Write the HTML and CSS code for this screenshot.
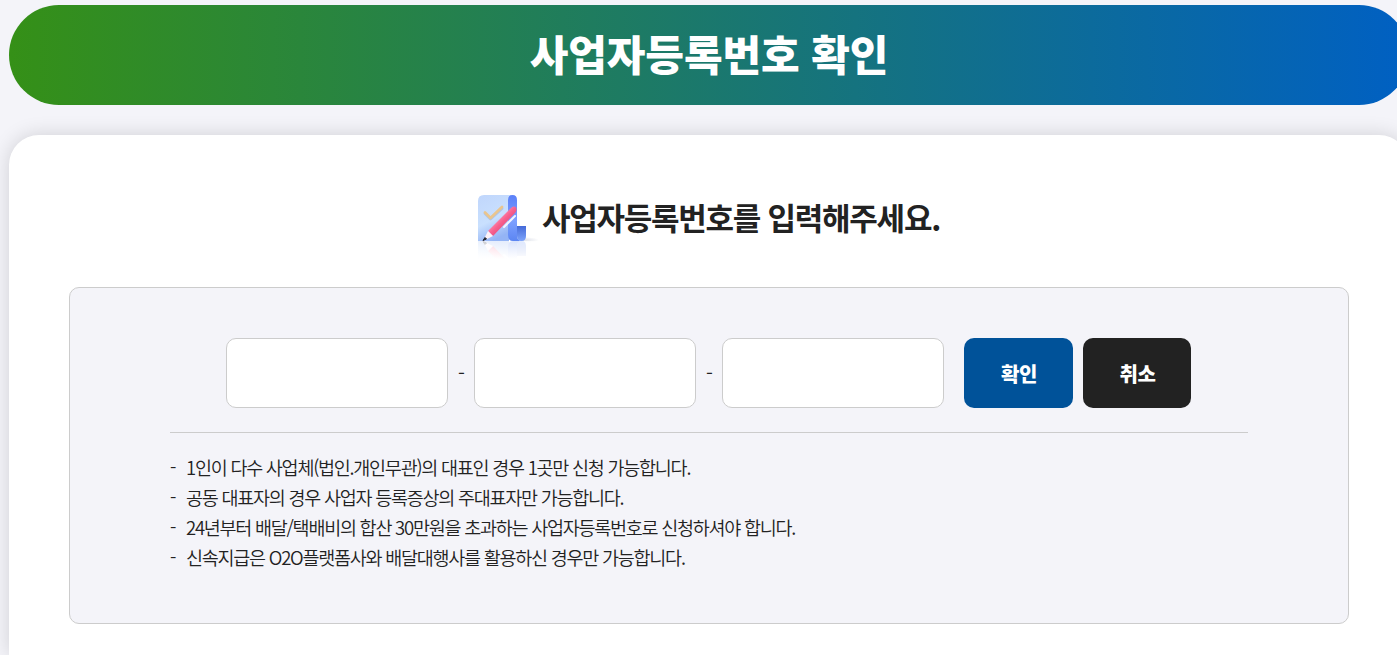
FILE: index.html
```
<!DOCTYPE html>
<html lang="ko">
<head>
    <meta charset="UTF-8">
    <meta name="viewport" content="width=device-width, initial-scale=1.0">
    <title>사업자등록번호 확인</title>
    <link rel="stylesheet" href="styles.css">
</head>
<body>
    <div class="container">
        <h1 class="page-title">사업자등록번호 확인</h1>

        <div class="card">
            <div class="card-title">
                <svg class="title-icon" width="62" height="68" viewBox="0 0 62 68" aria-hidden="true">
                    <defs>
                        <linearGradient id="paper" x1="0" y1="0" x2="0.4" y2="1">
                            <stop offset="0" stop-color="#c0d6fc"/>
                            <stop offset="0.6" stop-color="#c9e0fe"/>
                            <stop offset="1" stop-color="#94b4f5"/>
                        </linearGradient>
                        <linearGradient id="roll" x1="0" y1="0" x2="0" y2="1">
                            <stop offset="0" stop-color="#5b80f8"/>
                            <stop offset="0.55" stop-color="#7da0ff"/>
                            <stop offset="1" stop-color="#5c86f2"/>
                        </linearGradient>
                        <linearGradient id="curl" x1="0" y1="0" x2="0" y2="1">
                            <stop offset="0" stop-color="#456ad8"/>
                            <stop offset="1" stop-color="#7da4fb"/>
                        </linearGradient>
                        <linearGradient id="pen" x1="0.3" y1="0.3" x2="0.7" y2="0.7">
                            <stop offset="0" stop-color="#ff9cb9"/>
                            <stop offset="0.5" stop-color="#f8608e"/>
                            <stop offset="1" stop-color="#e04a78"/>
                        </linearGradient>
                        <linearGradient id="fade" x1="0" y1="0" x2="0" y2="1">
                            <stop offset="0" stop-color="#fff" stop-opacity="0.76"/>
                            <stop offset="0.85" stop-color="#fff"/>
                        </linearGradient>
                        <radialGradient id="shade">
                            <stop offset="0" stop-color="#9da5bd" stop-opacity="0.35"/>
                            <stop offset="1" stop-color="#9da5bd" stop-opacity="0"/>
                        </radialGradient>
                    </defs>
                    <ellipse cx="46" cy="46" rx="15" ry="3" fill="url(#shade)"/>
                    <g id="note">
                        <path d="M6 1H36Q31 1 31 6V47H0V7Q0 1 6 1Z" fill="url(#paper)"/>
                        <path d="M30 6Q30 1 34.500 1Q39 1 39 6V41Q39 47 44 47H35Q30 47 30 41Z" fill="url(#roll)"/>
                        <path d="M39 32H48V42Q48 47 43.500 47Q39 47 39 42Z" fill="url(#curl)"/>
                        <path d="M7 19.500L12.500 25L24 14.500" fill="none" stroke="#99b3df" stroke-width="2.800" stroke-linejoin="round" stroke-linecap="round" opacity="0.6"/>
                        <path d="M7 18.500L12.500 24L24 13" fill="none" stroke="#e9c58f" stroke-width="2.800" stroke-linejoin="round" stroke-linecap="round"/>
                        <path d="M26 33L37 22" stroke="#f3f5ff" stroke-width="2" stroke-linecap="round"/>
                        <path d="M10 37L33 14Q36 11.500 38 13.500Q39.500 16 37 19L15 42Z" fill="url(#pen)"/>
                        <path d="M10 37L15 42L5 47Z" fill="#fff2f7"/>
                        <path d="M7 43.500L8.500 45L5 46.500Z" fill="#202432" stroke="#202432"/>
                    </g>
                    <use href="#note" transform="matrix(1 0 0 -1 0 94)"/>
                    <rect x="0" y="47" width="62" height="21" fill="url(#fade)"/>
                </svg>
                <h2>사업자등록번호를 입력해주세요.</h2>
            </div>

            <div class="form-box">
                <form class="input-group">
                    <input type="text" maxlength="3" aria-label="사업자등록번호 앞자리">
                    <span class="dash">-</span>
                    <input type="text" maxlength="2" aria-label="사업자등록번호 가운데자리">
                    <span class="dash">-</span>
                    <input type="text" maxlength="5" aria-label="사업자등록번호 뒷자리">
                    <div class="button-group">
                        <button type="button" class="confirm-btn">확인</button>
                        <button type="reset" class="cancel-btn">취소</button>
                    </div>
                </form>
                <ul class="notice">
                    <li><span>1인이 다수 사업체(법인.개인무관)의 대표인 경우 1곳만 신청 가능합니다.</span></li>
                    <li><span>공동 대표자의 경우 사업자 등록증상의 주대표자만 가능합니다.</span></li>
                    <li><span>24년부터 배달/택배비의 합산 30만원을 초과하는 사업자등록번호로 신청하셔야 합니다.</span></li>
                    <li><span>신속지급은 O2O플랫폼사와 배달대행사를 활용하신 경우만 가능합니다.</span></li>
                </ul>
            </div>
        </div>
    </div>
</body>
</html>
```
FILE: styles.css
```
* {
    margin: 0;
    padding: 0;
    box-sizing: border-box;
    font-family: 'Noto Sans CJK KR', sans-serif;
}

body {
    height: 100vh;
    padding: 5px 0 0 9px;
    background: #f4f4f9;
    color: #222;
    overflow: hidden;
}

.container {
    width: 1400px;
}

.page-title {
    height: 100px;
    margin-bottom: 30px;
    border-radius: 50px;
    background: linear-gradient(90deg, #359017, #0060c3);
    color: #fff;
    font-size: 42px;
    font-weight: 900;
    line-height: 96px;
    letter-spacing: -0.1px;
    text-align: center;
}

.card {
    height: 520px;
    padding: 59px 60px 0;
    border-radius: 30px 30px 0 0;
    background: #fff;
    box-shadow: 0 0 20px rgba(0, 0, 0, 0.15);
}

.card-title {
    display: flex;
    justify-content: center;
    height: 68px;
    margin-bottom: 25px;
}

.title-icon {
    flex: none;
    margin-right: 2px;
}

.card-title h2 {
    font-size: 31px;
    font-weight: 700;
    line-height: 46px;
    letter-spacing: -1.25px;
}

.form-box {
    height: 337px;
    padding: 50px 100px 0;
    border: 1px solid #ccc;
    border-radius: 10px;
    background: #f4f4f9;
}

.input-group {
    display: flex;
    justify-content: center;
    align-items: center;
    padding: 0 1px 24px 0;
    border-bottom: 1px solid #ccc;
}

.input-group input {
    width: 222px;
    height: 70px;
    padding: 0 20px;
    border: 1px solid #ccc;
    border-radius: 10px;
    background: #fff;
    font-size: 20px;
}

.dash {
    width: 26px;
    padding-left: 1px;
    font-size: 20px;
    line-height: 28px;
    font-weight: 350;
    text-align: center;
}

.button-group {
    display: flex;
    gap: 10px;
    margin-left: 20px;
}

.button-group button {
    width: 109px;
    height: 70px;
    padding-left: 1px;
    border: none;
    border-radius: 10px;
    color: #fff;
    font-size: 20px;
    font-weight: 900;
    letter-spacing: -0.5px;
    cursor: pointer;
}

.confirm-btn {
    background: #005299;
}

.button-group .cancel-btn {
    width: 108px;
    background: #222;
}

.notice {
    padding-top: 19px;
    list-style: none;
}

.notice li {
    display: flex;
    font-size: 18.5px;
    font-weight: 350;
    line-height: 30px;
    letter-spacing: -1.25px;
    white-space: nowrap;
}

.notice li::before {
    content: "-";
    width: 16px;
}
```
